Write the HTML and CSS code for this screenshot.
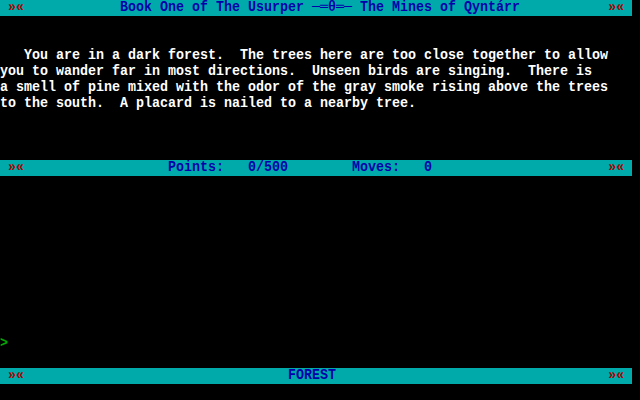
FILE: index.html
```html
<!DOCTYPE html>
<html>
<head>
<meta charset="utf-8">
<link rel="stylesheet" href="styles.css">
</head>
<body>
<div class="screen">
<pre class="bar row-1"> <span class="mark">»«</span>            Book One of The Usurper ─═θ═─ The Mines of Qyntárr           <span class="mark">»«</span> </pre>
<pre class="story row-4">   You are in a dark forest.  The trees here are too close together to allow
you to wander far in most directions.  Unseen birds are singing.  There is
a smell of pine mixed with the odor of the gray smoke rising above the trees
to the south.  A placard is nailed to a nearby tree.</pre>
<pre class="bar row-11"> <span class="mark">»«</span>                  Points:   0/500        Moves:   0                      <span class="mark">»«</span> </pre>
<pre class="prompt row-22">&gt;</pre>
<pre class="bar row-24"> <span class="mark">»«</span>                                 FOREST                                  <span class="mark">»«</span> </pre>
</div>
</body>
</html>
```
FILE: styles.css
```css
html, body {
  margin: 0;
  padding: 0;
  background: #000;
}
.screen {
  width: 640px;
  height: 400px;
  display: grid;
  grid-template-rows: repeat(25, 16px);
  grid-template-columns: 720px;
  background: #000;
  overflow: hidden;
  font-family: "Liberation Mono", monospace;
  font-weight: bold;
  font-size: 15px;
  line-height: 16px;
}
pre {
  margin: 0;
  font: inherit;
  white-space: pre;
  transform: scaleX(0.888889);
  transform-origin: 0 0;
}
.bar {
  width: 711px;
  height: 16px;
  background: #00aaaa;
  color: #0000aa;
}
.mark {
  color: #aa0000;
}
.story {
  color: #ffffff;
}
.prompt {
  color: #00aa00;
}
.row-1 { grid-row: 1; }
.row-4 { grid-row: 4 / span 4; }
.row-11 { grid-row: 11; }
.row-22 { grid-row: 22; }
.row-24 { grid-row: 24; }
```
